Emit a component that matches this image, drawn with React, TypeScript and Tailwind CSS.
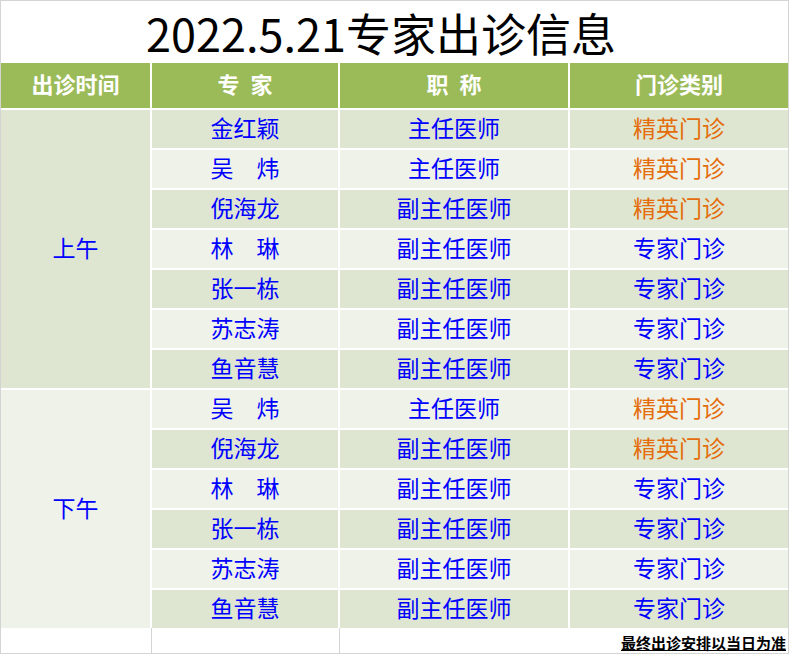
import React from "react";

type Row = { name: string; title: string; kind: string; orange: boolean };

const am: Row[] = [
  { name: "金红颖", title: "主任医师", kind: "精英门诊", orange: true },
  { name: "吴　炜", title: "主任医师", kind: "精英门诊", orange: true },
  { name: "倪海龙", title: "副主任医师", kind: "精英门诊", orange: true },
  { name: "林　琳", title: "副主任医师", kind: "专家门诊", orange: false },
  { name: "张一栋", title: "副主任医师", kind: "专家门诊", orange: false },
  { name: "苏志涛", title: "副主任医师", kind: "专家门诊", orange: false },
  { name: "鱼音慧", title: "副主任医师", kind: "专家门诊", orange: false },
];
const pm: Row[] = [
  { name: "吴　炜", title: "主任医师", kind: "精英门诊", orange: true },
  { name: "倪海龙", title: "副主任医师", kind: "精英门诊", orange: true },
  { name: "林　琳", title: "副主任医师", kind: "专家门诊", orange: false },
  { name: "张一栋", title: "副主任医师", kind: "专家门诊", orange: false },
  { name: "苏志涛", title: "副主任医师", kind: "专家门诊", orange: false },
  { name: "鱼音慧", title: "副主任医师", kind: "专家门诊", orange: false },
];

const font = { fontFamily: '"Noto Sans CJK SC", "Noto Sans", sans-serif' };

export default function App() {
  const all = [...am, ...pm];
  return (
    <div className="w-[789px] h-[655px] bg-white" style={font}>
      <div className="w-[789px] h-[654px] border border-[#d4d4d4] flex flex-col">
        <div className="h-[62px] flex items-center justify-center pr-[27px] text-[45px] text-black leading-none">
          2022.5.21专家出诊信息
        </div>
        <div className="grid grid-cols-[149px_186px_228px_218px] gap-x-[2px] gap-y-[2px] grid-rows-[45px_repeat(13,38px)]">
          {["出诊时间", "专\u2002家", "职\u2002称", "门诊类别"].map((h) => (
            <div
              key={h}
              className="bg-[#9bbb59] text-white font-bold text-[22px] flex items-center justify-center whitespace-pre pb-[4px]"
            >
              {h}
            </div>
          ))}
          <div
            className="bg-[#dee6d1] flex items-center justify-center text-[23px] text-[#0000ff] pb-[3px]"
            style={{ gridColumn: 1, gridRow: "2 / span 7" }}
          >
            上午
          </div>
          <div
            className="bg-[#eff2e9] flex items-center justify-center text-[23px] text-[#0000ff] pb-[3px]"
            style={{ gridColumn: 1, gridRow: "9 / span 6" }}
          >
            下午
          </div>
          {all.map((r, i) => {
            const bg = i % 2 === 0 ? "bg-[#dee6d1]" : "bg-[#eff2e9]";
            const row = i + 2;
            return (
              <React.Fragment key={i}>
                <div
                  className={`${bg} flex items-center justify-center text-[23px] text-[#0000ff] pb-[3px]`}
                  style={{ gridColumn: 2, gridRow: row }}
                >
                  {r.name}
                </div>
                <div
                  className={`${bg} flex items-center justify-center text-[23px] text-[#0000ff] pb-[3px]`}
                  style={{ gridColumn: 3, gridRow: row }}
                >
                  {r.title}
                </div>
                <div
                  className={`${bg} flex items-center justify-center text-[23px] pb-[3px] ${r.orange ? "text-[#e46c0a]" : "text-[#0000ff]"}`}
                  style={{ gridColumn: 4, gridRow: row }}
                >
                  {r.kind}
                </div>
              </React.Fragment>
            );
          })}
        </div>
        <div className="flex-1 grid grid-cols-[151px_188px_1fr]">
          <div className="border-r border-[#d4d4d4]" />
          <div className="border-r border-[#d4d4d4]" />
          <div className="flex items-center justify-end pr-[2px] pt-[4px]">
            <span className="text-[15px] font-semibold text-black underline leading-none">
              最终出诊安排以当日为准
            </span>
          </div>
        </div>
      </div>
    </div>
  );
}
